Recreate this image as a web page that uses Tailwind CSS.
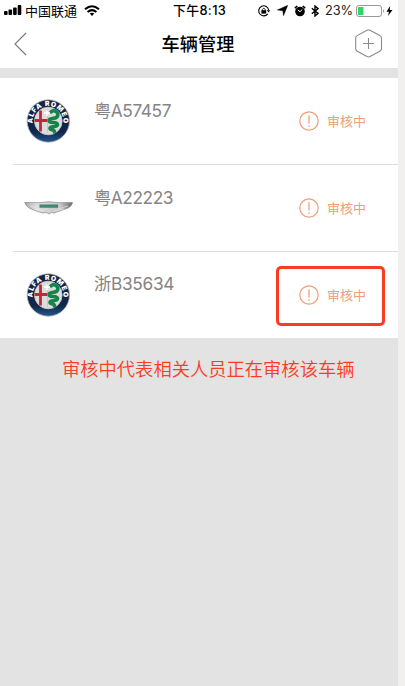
<!DOCTYPE html>
<html lang="zh-CN">
<head>
<meta charset="utf-8">
<title>车辆管理</title>
<script src="https://cdn.jsdelivr.net/npm/@tailwindcss/browser@4"></script>
</head>
<body class="h-[686px] w-[405px] overflow-hidden bg-[#f2f0ef] font-['Inter','Noto_Sans_CJK_SC',sans-serif]">
<svg width="0" height="0" class="absolute">
  <defs>
    <linearGradient id="wing" x1="0" y1="0" x2="1" y2="0"><stop offset="0" stop-color="#aaa"/><stop offset=".25" stop-color="#dedee0"/><stop offset=".75" stop-color="#c6c6ca"/><stop offset="1" stop-color="#666"/></linearGradient>
    <linearGradient id="ring" x1="0" y1="0" x2="0" y2="1"><stop offset="0" stop-color="#17223f"/><stop offset=".75" stop-color="#12264a"/><stop offset="1" stop-color="#23568c"/></linearGradient>
    <path id="arc" d="M6.8 25.5A15.500 15.500 0 1 1 37.2 25.5"/>
    <symbol id="alfa" viewBox="0 0 44 44">
      <circle cx="22.300" cy="22" r="21.2" fill="url(#ring)" stroke="#a9adb8" stroke-width=".8"/>
      <circle cx="22.300" cy="22" r="13.8" fill="#dcdddd" stroke="#c3c5c8" stroke-width="1"/>
      <path d="M14.5 11.5V32.5M8.500 21.5H21" stroke="#c9233b" stroke-width="2.8"/>
      <path d="M21.5 10V34" stroke="#bbb" stroke-width=".6"/>
      <path d="M25 12.800C29 9.500 34 14.500 31 18C28 20.500 23 18.500 23 21.500C23 25 31.500 22 31.500 25.500C31.500 29 23.500 26.500 24 29.500C24.500 31.500 28 30 28.500 33" fill="none" stroke="#16834a" stroke-width="3.600" stroke-linecap="round"/>
      <path d="M18 14H24M21 11.500V17" stroke="#fff" stroke-width="1.500"/>
      <text font-family="Inter" font-size="6.900" font-weight="900" fill="#fff"><textPath href="#arc" textLength="52" startOffset="1">ALFA ROMEO</textPath></text>
    </symbol>
    <symbol id="alert" viewBox="0 0 20 20">
      <circle cx="10" cy="10" r="9.200" fill="none" stroke="#eda07a" stroke-width="1.200"/>
      <path d="M10 4.300V12.600M10 14.200V15.700" stroke="#eda07a" stroke-width="1.300"/>
    </symbol>
  </defs>
</svg>
<div class="flex h-full w-[398px] flex-col bg-[#e3e3e3]">
  <header class="h-[68px] bg-white">
    <div class="grid h-[20px] grid-cols-[170px_60px_168px] items-center text-black">
      <div class="flex items-center pl-[4px]">
        <svg width="18" height="11" viewBox="0 0 18 11"><rect x="0" y="6" width="3.600" height="4" rx="1"/><rect x="4.500" y="4.500" width="3.600" height="5.500" rx="1"/><rect x="9.100" y="2.500" width="3.600" height="7.500" rx="1"/><rect x="13.700" y="0" width="3.600" height="10" rx="1"/></svg>
        <span class="ml-[3px] text-[13px] leading-[20px]">中国联通</span>
        <svg class="ml-[7px]" width="16" height="11" viewBox="0 0 16 11" fill="none" stroke="#000" stroke-width="2"><path d="M1 4.300Q8-1.800 15 4.300M3.600 7Q8 3.200 12.400 7"/><path d="M5.700 8.600Q8 6.900 10.300 8.600L8 10.900Z" fill="#000" stroke="none"/></svg>
      </div>
      <div class="whitespace-nowrap pl-[3px] pt-px text-[12.800px] font-medium leading-[20px] tracking-[0.4px]">下午8:13</div>
      <div class="flex items-center pl-[28px]">
        <svg width="12" height="12" viewBox="0 0 12 12"><path d="M9.800 8.800A5 5 0 1 1 10.700 5" fill="none" stroke="#000" stroke-width="1.100"/><path d="M8.800 5.300H12.200L10.500 7.500Z"/><rect x="3.400" y="5.200" width="4.800" height="3.400"/><path d="M4.300 5.500V4.500Q5.800 2 7.300 4.500V5.500" fill="none" stroke="#000" stroke-width=".9"/></svg>
        <svg class="ml-[7px]" width="11" height="11" viewBox="0 0 11 11"><path d="M10.800.2L6.500 10.800L5.800 5.700L.3 5Z" stroke="#000" stroke-width=".4"/></svg>
        <svg class="ml-[6px]" width="12" height="12" viewBox="0 0 12 12"><circle cx="6" cy="6.500" r="4.800"/><path d="M.8 3.200L3.300 1M11.200 3.200L8.700 1" stroke="#000" stroke-width="1.600"/><path d="M3.800 5L6 6.700L8.300 4.500" fill="none" stroke="#fff" stroke-width="1"/></svg>
        <svg class="ml-[5px]" width="8" height="12" viewBox="0 0 8 12" fill="none" stroke="#000" stroke-width="1.400"><path d="M.8 3.300L7 8.400L4 11V1L7 3.600L.8 8.700"/></svg>
        <span class="ml-[6px] w-[28px] pt-px text-[12.800px] leading-[20px] tracking-[-0.1px] text-[#222]">23%</span>
        <svg class="ml-[3px] shrink-0" width="29" height="12" viewBox="0 0 29 12"><rect x=".5" y=".5" width="25" height="11" rx="2.500" fill="#fff" stroke="#999"/><rect x="2" y="2" width="5.500" height="8" rx=".5" fill="#2fd765"/><path d="M27 4Q29 6 27 8Z" fill="#999"/></svg>
        <svg class="ml-[1px] shrink-0" width="7" height="10" viewBox="0 0 7 10"><path d="M4.200 0L.5 5.700H3L2 10L6.500 4H3.700Z"/></svg>
      </div>
    </div>
    <div class="grid h-[48px] grid-cols-[99px_198px_101px] items-center">
      <svg class="ml-[14px]" width="13" height="24" viewBox="0 0 13 24" fill="none" stroke="#777" stroke-width="1.100"><path d="M12 1L1 12L12 23"/></svg>
      <h1 class="text-center text-[18.200px] font-medium leading-[26px] text-black">车辆管理</h1>
      <svg class="ml-[58px] mb-[1px]" width="28" height="29" viewBox="0 0 28 29" fill="none" stroke="#8b8b8b" stroke-width="1.100"><path d="M12 1.200Q13.500.4 15 1.200L24.800 6.600Q26.500 7.600 26.500 9V19.700Q26.500 21.200 24.800 22.200L15 27.600Q13.500 28.400 12 27.600L2.200 22.200Q.7 21.200.7 19.700V9Q.7 7.600 2.200 6.600ZM13.500 9V20M8 14.500H19"/></svg>
    </div>
  </header>
  <main class="mt-[10px] flex h-[260px] flex-col bg-white">
    <section class="flex h-[86px] items-start">
      <svg class="ml-[26px] mt-[21px]" width="44" height="44"><use href="#alfa"/></svg>
      <h2 class="ml-[24px] mt-[20px] w-[205px] text-[17.300px] font-normal leading-[26px] tracking-[-0.42px] text-[#858585]">粤A57457</h2>
      <div class="mt-[33px] flex items-center"><svg width="20" height="20"><use href="#alert"/></svg><span class="ml-[8px] text-[13px] leading-[20px] text-[#eda07a]">审核中</span></div>
    </section>
    <div class="ml-[13px] h-px bg-[#dedede]"></div>
    <section class="flex h-[86px] items-start">
      <svg class="ml-[24px] mt-[36px]" width="50" height="14" viewBox="0 0 50 14"><path d="M.7 1.500L15 1.700L25 .8L35 1.700L48.500 1.500Q48 5 44 7L30 12L27.500 11.500L25 13L22.500 11.500L19 12Q14 11 6 7.500Q1.500 5 .7 1.500Z" fill="url(#wing)" stroke="#888" stroke-width=".7"/><path d="M6 5L16 8M44 5L34 8M10 8L20 10M40 8L30 10" stroke="#eee" stroke-width=".6"/><rect x="15.500" y="3.500" width="18.500" height="3.200" fill="#35806c"/><path d="M17 5H33" stroke="#80ad9d" stroke-width=".6" stroke-dasharray="1 .6"/></svg>
      <h2 class="ml-[20px] mt-[20px] w-[205px] text-[17.300px] font-normal leading-[26px] tracking-[-0.42px] text-[#858585]">粤A22223</h2>
      <div class="mt-[33px] flex items-center"><svg width="20" height="20"><use href="#alert"/></svg><span class="ml-[8px] text-[13px] leading-[20px] text-[#eda07a]">审核中</span></div>
    </section>
    <div class="ml-[13px] h-px bg-[#dedede]"></div>
    <section class="relative flex h-[86px] items-start">
      <svg class="ml-[26px] mt-[21px]" width="44" height="44"><use href="#alfa"/></svg>
      <h2 class="ml-[24px] mt-[19px] w-[205px] text-[17.300px] font-normal leading-[26px] tracking-[-0.3px] text-[#858585]">浙B35634</h2>
      <div class="mt-[33px] flex items-center"><svg width="20" height="20"><use href="#alert"/></svg><span class="ml-[8px] text-[13px] leading-[20px] text-[#eda07a]">审核中</span></div>
      <div class="absolute left-[276px] top-[14px] h-[60px] w-[109px] rounded-[5px] border-[3px] border-[#fb3b24]"></div>
    </section>
  </main>
  <p class="mt-[17px] whitespace-nowrap pl-[62px] text-[18.300px] font-[350] leading-[28px] text-[#fb3b24]">审核中代表相关人员正在审核该车辆</p>
</div>
</body>
</html>
